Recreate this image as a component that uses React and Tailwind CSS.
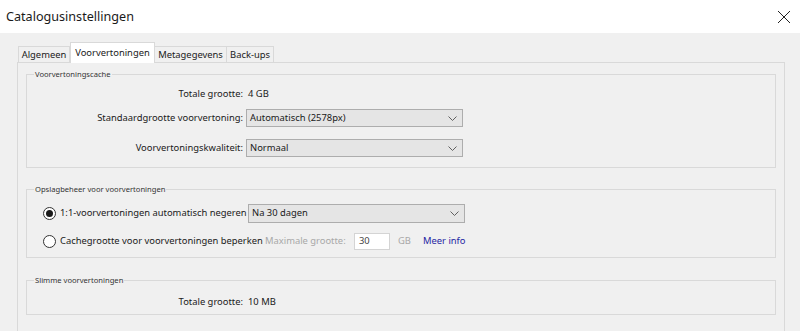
import React from 'react';

const Chevron = () => (
  <svg width="9" height="5" viewBox="0 0 9 5" className="shrink-0">
    <path d="M0.5 0.5 L4.5 4.5 L8.5 0.5" fill="none" stroke="#606060" strokeWidth="1" />
  </svg>
);

const Select = ({ value, className = '' }) => (
  <div
    className={`flex items-center justify-between h-[18px] w-[217px] shrink-0 bg-[#e5e5e5] border border-[#adadad] pl-[3px] pr-[5px] text-[#1a1a1a] ${className}`}
  >
    <span>{value}</span>
    <Chevron />
  </div>
);

const Radio = ({ checked }) => (
  <div className="w-[13px] h-[13px] rounded-full border border-[#333333] bg-white flex items-center justify-center shrink-0">
    {checked && <div className="w-[7px] h-[7px] rounded-full bg-[#1a1a1a]" />}
  </div>
);

const Group = ({ title, className = '', children }) => (
  <fieldset className={`border border-[#d9d9d9] ${className}`}>
    <legend className="ml-[7px] px-[1px] text-[7.6px] leading-[11px] text-[#333333] whitespace-nowrap">{title}</legend>
    {children}
  </fieldset>
);

const Row = ({ label, children, className = '' }) => (
  <div className={`flex items-center h-[18px] whitespace-nowrap ${className}`}>
    <div className="w-[219px] shrink-0 text-right pr-[3px] text-[#1a1a1a]">{label}</div>
    {children}
  </div>
);

const tabs = [
  { name: 'Algemeen', w: 'w-[52px]' },
  { name: 'Voorvertoningen', w: 'w-[85px]', active: true },
  { name: 'Metagegevens', w: 'w-[73px]' },
  { name: 'Back-ups', w: 'w-[48px]' },
];

export default function App() {
  return (
    <div
      className="w-[800px] h-[331px] overflow-hidden bg-[#f0f0f0] text-[9.4px] text-[#1a1a1a]"
      style={{ fontFamily: '"Noto Sans", "Open Sans", sans-serif' }}
    >
      <div className="h-[33px] bg-white flex items-center justify-between pl-[6px] pr-[9px]">
        <span className="text-[12.6px] text-[#1a1a1a] pt-[1px]">Catalogusinstellingen</span>
        <svg width="14" height="14" viewBox="0 0 14 14">
          <path d="M1 1 L13 13 M13 1 L1 13" stroke="#222222" strokeWidth="1" />
        </svg>
      </div>

      <div className="pl-[17px] pt-[9px]">
        <div className="flex items-end h-[20px] pl-[1px] relative z-10 whitespace-nowrap">
          {tabs.map((t) =>
            t.active ? (
              <div
                key={t.name}
                className={`${t.w} h-[21px] -mb-[1px] bg-white border border-b-0 border-[#d9d9d9] flex items-center justify-center`}
              >
                {t.name}
              </div>
            ) : (
              <div
                key={t.name}
                className={`${t.w} h-[16px] bg-[#f0f0f0] border border-b-0 border-[#d9d9d9] -ml-[1px] first:ml-0 flex items-center justify-center pt-[1px]`}
              >
                {t.name}
              </div>
            )
          )}
        </div>

        <div className="w-[768px] h-[300px] border border-[#d9d9d9] bg-[#f0f0f0] px-[8px] pt-[6px]">
          <Group title="Voorvertoningscache" className="h-[99px]">
            <div className="flex flex-col pt-[5px]">
              <Row label="Totale grootte:">
                <span className="pl-[2px]">4 GB</span>
              </Row>
              <Row label="Standaardgrootte voorvertoning:" className="mt-[6px]">
                <Select value="Automatisch (2578px)" />
              </Row>
              <Row label="Voorvertoningskwaliteit:" className="mt-[12px]">
                <Select value="Normaal" />
              </Row>
            </div>
          </Group>

          <Group title="Opslagbeheer voor voorvertoningen" className="mt-[16px] h-[74px]">
            <div className="flex flex-col pl-[16px] pt-[9px] whitespace-nowrap">
              <div className="flex items-center h-[19px]">
                <Radio checked />
                <span className="pl-[4px] w-[192px] shrink-0">1:1-voorvertoningen automatisch negeren</span>
                <Select value="Na 30 dagen" className="h-[19px]" />
              </div>
              <div className="flex items-center h-[18px] mt-[9px]">
                <Radio />
                <span className="pl-[4px] w-[209px] shrink-0">Cachegrootte voor voorvertoningen beperken</span>
                <span className="w-[89px] shrink-0 text-[#a8a8a8]">Maximale grootte:</span>
                <div className="w-[36px] h-[17px] shrink-0 bg-white border border-[#d4d4d4] pl-[4px] flex items-center text-[#444444]">
                  30
                </div>
                <span className="pl-[8px] w-[33px] shrink-0 text-[#a8a8a8]">GB</span>
                <span className="text-[#1f1fa3]">Meer info</span>
              </div>
            </div>
          </Group>

          <Group title="Slimme voorvertoningen" className="mt-[17px] h-[40px]">
            <div className="flex flex-col pt-[7px]">
              <Row label="Totale grootte:">
                <span className="pl-[2px]">10 MB</span>
              </Row>
            </div>
          </Group>
        </div>
      </div>
    </div>
  );
}
